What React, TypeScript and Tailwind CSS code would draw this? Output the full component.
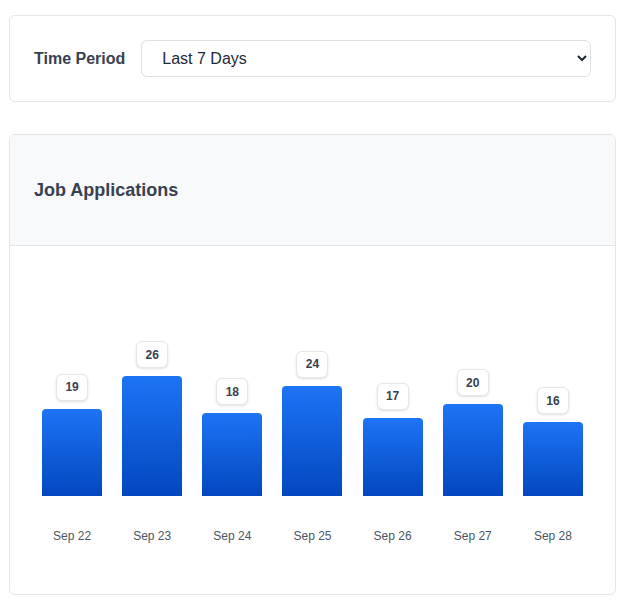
import React from "react";

const data = [
  ["Sep 22", 19],
  ["Sep 23", 26],
  ["Sep 24", 18],
  ["Sep 25", 24],
  ["Sep 26", 17],
  ["Sep 27", 20],
  ["Sep 28", 16],
] as const;

export default function App() {
  return (
    <div className="w-[625px] h-[608px] bg-white px-[9px] pt-[15px]" style={{ fontFamily: '"Liberation Sans", Arial, sans-serif' }}>
      <div className="h-[87px] border border-[#e2e5e9] rounded-md flex items-center px-[24px] gap-[16px]">
        <span className="text-[16px] font-bold text-[#374151]">Time Period</span>
        <select className="flex-1 h-[37px] border border-[#dde0e4] rounded-md px-[16px] text-[16px] text-[#1f2937] bg-white">
          <option>Last 7 Days</option>
        </select>
      </div>
      <div className="mt-[32px] h-[461px] border border-[#e2e5e9] rounded-md overflow-hidden">
        <div className="h-[111px] bg-[#f8f9fa] border-b border-[#e2e5e9] flex items-center px-[24px]">
          <h2 className="text-[18px] font-bold text-[#374151]">Job Applications</h2>
        </div>
        <div className="flex px-[22px]">
          {data.map(([d, v]) => (
            <div key={d} className="flex-1 flex flex-col items-center">
              <div className="h-[250px] flex flex-col justify-end items-center">
                <div className="h-[27px] min-w-[32px] px-[6px] bg-white border border-[#e5e7eb] rounded-md shadow-sm flex items-center justify-center text-[12px] font-bold text-[#374151] mb-[8px]">
                  {v}
                </div>
                <div className="w-[60px] rounded-t-[4px] bg-gradient-to-b from-[#1d74f5] to-[#0447bf]" style={{ height: v * 4.6 }} />
              </div>
              <div className="mt-[31px] text-[12px] text-[#4b5563]">{d}</div>
            </div>
          ))}
        </div>
      </div>
    </div>
  );
}
